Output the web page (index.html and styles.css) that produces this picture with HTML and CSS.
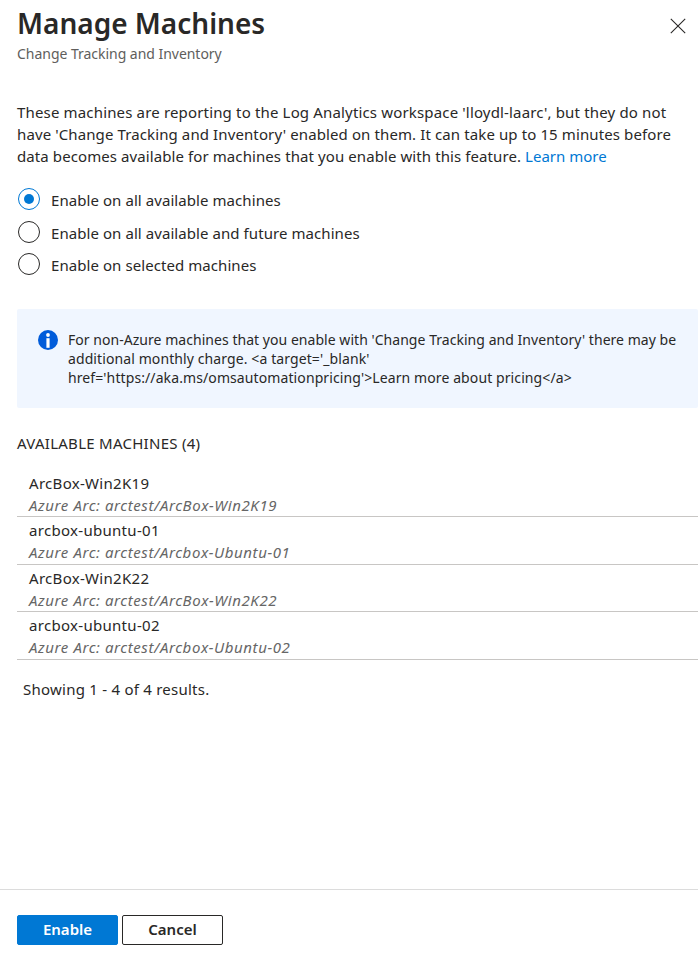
FILE: index.html
```html
<!DOCTYPE html>
<html lang="en">
<head>
<meta charset="utf-8">
<title>Manage Machines</title>
<link rel="stylesheet" href="styles.css">
</head>
<body>
<main class="blade">
  <header class="header">
    <div>
      <h1 class="title">Manage Machines</h1>
      <p class="subtitle">Change Tracking and Inventory</p>
    </div>
    <button class="close" aria-label="Close"><svg width="16" height="16" viewBox="0 0 16 16"><path d="M.8.8l14.4 14.4M15.2.8L.8 15.2"/></svg></button>
  </header>
  <p class="intro"><span class="i1">These machines are reporting to the Log Analytics workspace 'lloydl-laarc', but they do not</span><br><span class="i2">have 'Change Tracking and Inventory' enabled on them. It can take up to 15 minutes before</span><br><span class="i3">data becomes available for machines that you enable with this feature. <a class="link">Learn more</a></span></p>
  <div class="options">
    <label class="option selected"><i class="radio"></i><span>Enable on all available machines</span></label>
    <label class="option"><i class="radio"></i><span>Enable on all available and future machines</span></label>
    <label class="option"><i class="radio"></i><span>Enable on selected machines</span></label>
  </div>
  <section class="info">
    <svg class="info-icon" width="20" height="20" viewBox="0 0 20 20"><circle cx="10" cy="10" r="10" fill="#015cda"/><circle cx="10" cy="5" r="1.9" fill="#fff"/><path d="M8.4 8.2h3.2v9.6H8.4z" fill="#fff"/></svg>
    <p class="info-text"><span class="n1">For non-Azure machines that you enable with 'Change Tracking and Inventory' there may be</span><br><span class="n2">additional monthly charge. &lt;a target='_blank'</span><br><span class="n2">href='https://aka.ms/omsautomationpricing'&gt;Learn more about pricing&lt;/a&gt;</span></p>
  </section>
  <h2 class="list-title">AVAILABLE MACHINES (4)</h2>
  <ul class="machines">
    <li><span class="name">ArcBox-Win2K19</span><span class="path">Azure Arc: arctest/ArcBox-Win2K19</span></li>
    <li><span class="name">arcbox-ubuntu-01</span><span class="path">Azure Arc: arctest/Arcbox-Ubuntu-01</span></li>
    <li><span class="name">ArcBox-Win2K22</span><span class="path">Azure Arc: arctest/ArcBox-Win2K22</span></li>
    <li><span class="name">arcbox-ubuntu-02</span><span class="path">Azure Arc: arctest/Arcbox-Ubuntu-02</span></li>
  </ul>
  <p class="results">Showing 1 - 4 of 4 results.</p>
  <footer class="footer"><button class="btn primary">Enable</button><button class="btn">Cancel</button></footer>
</main>
</body>
</html>
```
FILE: styles.css
```css
* { box-sizing: border-box; }
body, h1, h2, p, ul { margin: 0; padding: 0; }
body { font-family: "Noto Sans", "Open Sans", sans-serif; font-size: 15px; color: #292827; background: #fff; }
.blade { height: 958px; display: flex; flex-direction: column; overflow: hidden; white-space: nowrap; }
.header { height: 101px; padding: 3px 12px 0 17px; display: flex; justify-content: space-between; }
.title { font-size: 28px; line-height: 40px; font-weight: 600; }
.subtitle { font-size: 14px; line-height: 20px; padding-top: 1px; letter-spacing: -0.03px; color: #605e5c; }
.close { width: 16px; height: 16px; margin-top: 15px; padding: 0; border: 0; background: none; }
.close svg { display: block; fill: none; stroke: #292827; stroke-width: 1.1; }
.intro { padding-left: 17px; line-height: 22px; height: 66px; }
.i1 { letter-spacing: 0.16px; }
.i2 { letter-spacing: 0.11px; }
.i3 { letter-spacing: 0.09px; }
.link { color: #0078d4; letter-spacing: 0; }
.options { padding: 21px 0 0 18px; height: 142px; }
.option { display: flex; align-items: flex-start; height: 32.5px; line-height: 24px; letter-spacing: 0.07px; }
.radio { width: 22px; height: 22px; border: 1px solid #292827; border-radius: 50%; margin-right: 11px; display: grid; place-items: center; }
.selected .radio { border-color: #0078d4; }
.selected .radio::after { content: ""; width: 10px; height: 10px; border-radius: 50%; background: #0078d4; }
.info { height: 99px; margin-left: 17px; padding: 21px 0 0 21px; background: #f0f6ff; border-radius: 2px; display: flex; gap: 10px; flex: none; }
.info-icon { flex: none; }
.info-text { font-size: 14px; line-height: 19px; }
.n1 { letter-spacing: 0.04px; }
.n2 { letter-spacing: 0.1px; }
.list-title { font-size: 15px; font-weight: 400; line-height: 22px; padding-left: 17px; margin-top: 24px; letter-spacing: 0.27px; }
.machines { list-style: none; margin: 15.4px 0 0 17px; }
.machines li { height: 47.6px; border-bottom: 1px solid #c8c6c4; padding: 2.2px 0 0 12px; line-height: 22px; }
.name, .path { display: block; }
.name { letter-spacing: 0.3px; }
.path { font-style: italic; letter-spacing: 0.59px; color: #666; }
.results { padding-left: 23px; margin-top: 18.2px; line-height: 22px; letter-spacing: 0.24px; }
.footer { margin-top: auto; height: 69px; border-top: 1px solid #dcdcdc; padding: 25px 17px 0; display: flex; gap: 4px; }
.btn { width: 101px; height: 30px; font: 600 15px "Noto Sans", sans-serif; border: 1px solid #292827; border-radius: 2px; background: #fff; color: #292827; padding: 0 0 2px; }
.primary { background: #0078d4; border-color: #0078d4; color: #fff; }
```
